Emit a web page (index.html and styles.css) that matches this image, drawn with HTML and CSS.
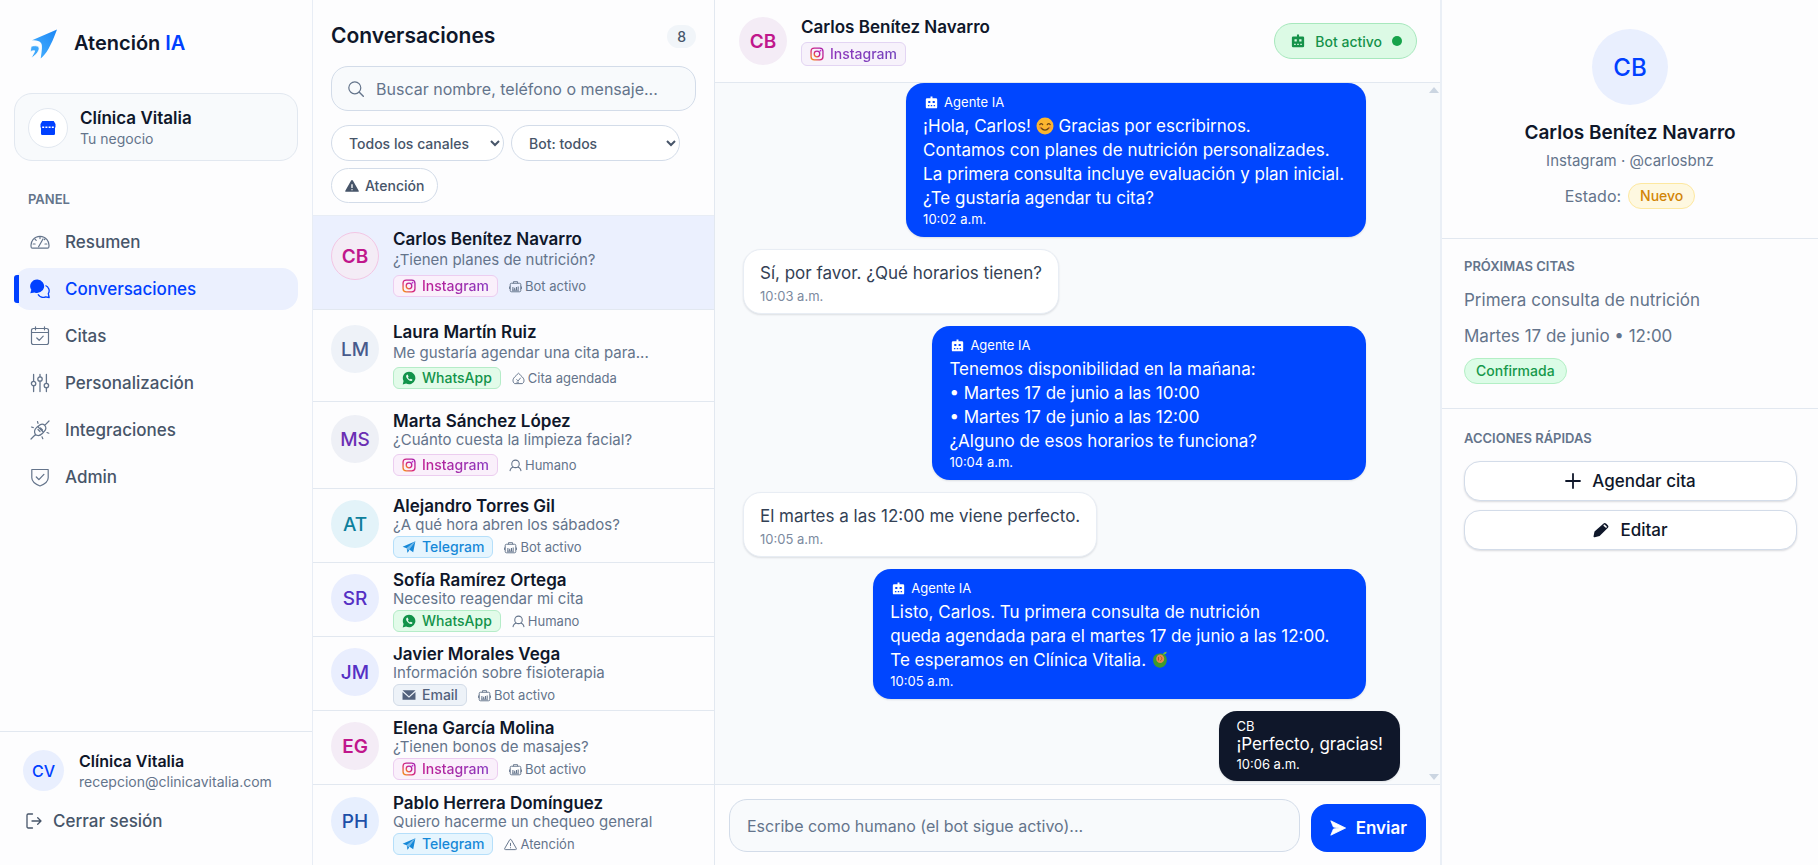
FILE: index.html
```html
<!DOCTYPE html>
<html lang="es">
<head>
	<meta charset="UTF-8">
	<meta name="viewport" content="width=device-width, initial-scale=1">
	<title>Atención IA</title>
	<link rel="stylesheet" href="styles.css">
</head>
<body>

<!-- Icon sprite -->
<svg class="sprite" aria-hidden="true">
	<defs>
		<linearGradient id="ig" x1="0" y1="1" x2="1" y2="0">
			<stop offset="0" stop-color="#f59e0b"/>
			<stop offset="0.4" stop-color="#db2777"/>
			<stop offset="1" stop-color="#a21caf"/>
		</linearGradient>
		<linearGradient id="sky" x1="1" y1="0" x2="0" y2="1">
			<stop offset="0" stop-color="#1b86f5"/>
			<stop offset="1" stop-color="#4bb4ff"/>
		</linearGradient>
	</defs>
	<symbol id="i-gauge" viewBox="0 0 20 20">
		<path d="M2.6 16.2a1.6 1.6 0 0 1-1.4-1A9 9 0 1 1 18.8 15.200a1.600 1.600 0 0 1-1.400 1z" fill="none" stroke="currentColor" stroke-width="1.200"/>
		<path d="M8.600 14.800 13 7M10 4.800v1.800M5 7.200l1.200 1.200M3.200 12h1.900M15 12h1.800M14.400 7.600l.6-.6" fill="none" stroke="currentColor" stroke-width="1.200" stroke-linecap="round"/>
	</symbol>
	<symbol id="i-chats" viewBox="0 0 20 20">
		<path d="M7.500.5a7 6.700 0 1 1-3 12.900L.3 14.200l1-3.400A7 6.700 0 0 1 7.500.5z" fill="currentColor"/>
		<path d="M15.500 6.500a5.600 5.600 0 0 1 2.800 8.200l.9 3.800-3.600-.7a6 6 0 0 1-7.600-2.400" fill="none" stroke="currentColor" stroke-width="1.300" stroke-linejoin="round"/>
	</symbol>
	<symbol id="i-calendar" viewBox="0 0 20 20">
		<path d="M3.300 2.500h13.400a1.800 1.800 0 0 1 1.800 1.800v12.400a1.800 1.800 0 0 1-1.800 1.800H3.300a1.800 1.800 0 0 1-1.800-1.800V4.300a1.800 1.800 0 0 1 1.800-1.800zM1.500 6.500h17M5.500.8v3M14.500.8v3M6.800 12l2.400 2.300 4-4.200" fill="none" stroke="currentColor" stroke-width="1.200" stroke-linecap="round" stroke-linejoin="round"/>
	</symbol>
	<symbol id="i-sliders" viewBox="0 0 20 20">
		<g fill="none" stroke="currentColor" stroke-width="1.300" stroke-linecap="round">
			<circle cx="3.600" cy="10.500" r="2.200"/><circle cx="10" cy="6" r="2.200"/><circle cx="16.400" cy="12.500" r="2.200"/>
			<path d="M3.600 1.500v6.800M3.600 12.700v5.800M10 1.500v2.300M10 8.200v10.300M16.400 1.500v8.800M16.400 14.700v3.800"/>
		</g>
	</symbol>
	<symbol id="i-plug" viewBox="0 0 20 20">
		<g fill="none" stroke="currentColor" stroke-width="1.200" stroke-linecap="round" stroke-linejoin="round">
			<path d="M1 19l4.500-4.500M5.500 14.500C3.800 12 4.600 9.600 6.500 7.700l1.200-1.200 5.800 5.800-1.200 1.200c-1.900 1.900-4.600 2.600-6.800 1zM8.500 6c2-2 4.300-2.500 6.200-.7 1.700 1.900 1.400 4.200-.6 6.200M14.700 5.300 19 1M8 9.500l2 2M10.500 8l2 2"/>
			<path d="M7.500 1.500l.5 1.800M1.500 7l1.800.6M12 16.800l.8 1.900M17 12.500l1.800.7"/>
		</g>
	</symbol>
	<symbol id="i-shield" viewBox="0 0 20 20">
		<path d="M1.800 2.500h16.400v8.200c0 4.200-4 6.600-8.200 8.300-4.200-1.700-8.200-4.100-8.200-8.300z" fill="none" stroke="currentColor" stroke-width="1.200" stroke-linejoin="round"/>
		<path d="M6.300 10l2.600 2.600 5-5.200" fill="none" stroke="currentColor" stroke-width="1.300" stroke-linecap="round" stroke-linejoin="round"/>
	</symbol>
	<symbol id="i-logout" viewBox="0 0 16 16">
		<path d="M6.500 1H2.200A1.200 1.200 0 0 0 1 2.200v11.600A1.200 1.200 0 0 0 2.200 15h4.300M6 8h9M11.700 4.800 15 8l-3.300 3.200" fill="none" stroke="currentColor" stroke-width="1.300" stroke-linecap="round" stroke-linejoin="round"/>
	</symbol>
	<symbol id="i-shop" viewBox="0 0 16 16">
		<path d="M2.300 1h11.400L15.500 4v3.500h-15V4zM1 7.500h14v6.300a1.200 1.200 0 0 1-1.200 1.200H2.200A1.200 1.200 0 0 1 1 13.800z" fill="currentColor"/>
		<path d="M2.200 7.300h2M5.400 7.300h2M8.600 7.300h2M11.800 7.300h2" stroke="#fff" stroke-width="1.600"/>
	</symbol>
	<symbol id="i-search" viewBox="0 0 16 16">
		<circle cx="6.800" cy="6.800" r="6" fill="none" stroke="currentColor" stroke-width="1.200"/>
		<path d="M11.300 11.300 15.300 15.300" stroke="currentColor" stroke-width="1.400" stroke-linecap="round"/>
	</symbol>
	<symbol id="i-warn" viewBox="0 0 16 16">
		<path d="M7 1.800a1.150 1.150 0 0 1 2 0l6.500 11.200a1.150 1.150 0 0 1-1 1.700H1.500a1.150 1.150 0 0 1-1-1.700z" fill="currentColor"/>
		<path d="M8 6v4.200M8 11.700v1.200" stroke="#fff" stroke-width="1.500"/>
	</symbol>
	<symbol id="i-warn-line" viewBox="0 0 16 16">
		<path d="M7 2.200a1.150 1.150 0 0 1 2 0l6 10.400a1.150 1.150 0 0 1-1 1.700H2a1.150 1.150 0 0 1-1-1.700zM8 6v4M8 11.400v1.200" fill="none" stroke="currentColor" stroke-width="1.200"/>
	</symbol>
	<symbol id="i-bot-line" viewBox="0 0 16 16">
		<rect x="1.500" y="4" width="13" height="10.500" rx="1.500" fill="none" stroke="currentColor" stroke-width="1.200"/>
		<path d="M5.500 4V2h5v2M.6 8v3M15.400 8v3M3.600 12.600h8.800" fill="none" stroke="currentColor" stroke-width="1.100"/>
		<path d="M4.800 8.500v4M7 9.500v3M9.200 8.500v4M11.300 8v4" stroke="currentColor" stroke-width="1.300"/>
	</symbol>
	<symbol id="i-bot" viewBox="0 0 16 16">
		<path fill-rule="evenodd" d="M6.800.5h2.400v2.300h4.300a1.500 1.500 0 0 1 1.500 1.500v9.400a1.500 1.500 0 0 1-1.500 1.500h-11A1.500 1.500 0 0 1 1 13.700V4.300a1.500 1.500 0 0 1 1.500-1.500h4.300zM4 6v2.600h2.600V6zm5.400 0v2.600H12V6zM3.600 11v1.500h1.800V11zm3.500 0v1.500h1.800V11zm3.500 0v1.500h1.800V11z" fill="currentColor"/>
	</symbol>
	<symbol id="i-person" viewBox="0 0 16 16">
		<circle cx="8" cy="6" r="4.600" fill="none" stroke="currentColor" stroke-width="1.300"/>
		<path d="M1.200 15c.4-3 1.700-4.700 4.300-5.200M14.800 15c-.4-3-1.700-4.700-4.300-5.200" fill="none" stroke="currentColor" stroke-width="1.300"/>
	</symbol>
	<symbol id="i-booked" viewBox="0 0 16 16">
		<path d="M3.200 14.300C1.500 13 1 11.500 1.300 9.500 1.700 7 5 4.500 8 1.500c3 3 6.300 5.500 6.700 8 .3 2-.2 3.500-1.900 4.800z" fill="none" stroke="currentColor" stroke-width="1.200" stroke-linejoin="round"/>
		<path d="M5.500 9l2 2 3.200-4M5.500 12.500h3" fill="none" stroke="currentColor" stroke-width="1.200"/>
	</symbol>
	<symbol id="i-instagram" viewBox="0 0 16 16">
		<rect x="1.200" y="1.200" width="13.600" height="13.600" rx="3.600" fill="none" stroke="url(#ig)" stroke-width="1.500"/>
		<circle cx="8" cy="8" r="3.200" fill="none" stroke="url(#ig)" stroke-width="1.500"/>
		<circle cx="12" cy="4.200" r="1" fill="#c026d3"/>
	</symbol>
	<symbol id="i-whatsapp" viewBox="0 0 16 16">
		<path d="M8.100.8a7.200 7.200 0 1 1-3.500 13.500L.8 15.300l1-3.800A7.200 7.200 0 0 1 8.100.8z" fill="currentColor"/>
		<path d="M5.600 4.200c-1.400 1-1.100 3 .7 5s3.900 3 5.300 1.700c.5-.6.5-1 .1-1.300L10 8.800l-1 .9C8 9.300 7.200 8.400 6.800 7.500l.7-.9-.8-2c-.2-.5-.6-.7-1.100-.4z" fill="#e8fbee"/>
	</symbol>
	<symbol id="i-telegram" viewBox="0 0 16 16">
		<path d="M15.300 1.500.7 7.700l4.600 1.800zM15.300 1.500 12.800 14l-4.500-3.200zM6 10.200l.2 4.300 2-2.500z" fill="currentColor"/>
		<path d="M15.300 1.500 5.300 9.500l.9 5z" fill="currentColor" fill-opacity=".55"/>
	</symbol>
	<symbol id="i-mail" viewBox="0 0 16 16">
		<path d="M.6 2.500h14.800L8 9.300zM.6 4.500v9h14.800v-9L8 11z" fill="currentColor"/>
	</symbol>
	<symbol id="i-plus" viewBox="0 0 16 16">
		<path d="M8 1v14M1 8h14" stroke="currentColor" stroke-width="1.800" stroke-linecap="round"/>
	</symbol>
	<symbol id="i-pencil" viewBox="0 0 16 16">
		<path d="M10.300 1.800a2 2 0 0 1 2.700-.2l1.800 1.700a1.800 1.800 0 0 1-.1 2.600L6.600 14l-4.800 1.200a1 1 0 0 1-1.200-1.200l.9-4.500z" fill="currentColor"/>
		<path d="M11.300 3.300 13.100 5" stroke="#fff" stroke-width="1.600" stroke-linecap="round"/>
	</symbol>
	<symbol id="i-send" viewBox="0 0 16 16">
		<path d="M.8.8 15.600 8 .8 15.200 3.400 9 9.500 8 3.400 7z" fill="currentColor" stroke="currentColor" stroke-width=".8" stroke-linejoin="round"/>
	</symbol>
</svg>

<div class="app">

	<!-- Sidebar -->
	<aside class="sidebar">
		<div class="brand">
			<svg class="brand-logo" viewBox="0 0 28 30" aria-hidden="true">
				<path d="M27 .5 1.500 11.500c3.500-.6 8 .2 9.700 2.700 1.300 2.200.8 6.800-.5 15.300C16 25.500 21 17 27 .5z" fill="url(#sky)"/>
				<path d="M1.200 17.200c3.300-.8 6.400-.7 7.600.9C10.200 20.500 7 26 1.200 29c1.300-2.700 3.200-5.300 3.500-7.200-1.300-.4-2.900.2-4.500.9z" fill="#3fa8fb" stroke="#fff" stroke-width=".8"/>
			</svg>
			<span class="brand-name">Atención <b>IA</b></span>
		</div>

		<div class="business">
			<span class="business-icon"><svg class="ico-16"><use href="#i-shop"/></svg></span>
			<div>
				<div class="business-name">Clínica Vitalia</div>
				<div class="business-sub">Tu negocio</div>
			</div>
		</div>

		<h2 class="nav-title">PANEL</h2>
		<nav class="nav">
			<a href="#"><svg class="ico-20"><use href="#i-gauge"/></svg>Resumen</a>
			<a href="#" class="active"><svg class="ico-20"><use href="#i-chats"/></svg>Conversaciones</a>
			<a href="#"><svg class="ico-20"><use href="#i-calendar"/></svg>Citas</a>
			<a href="#"><svg class="ico-20"><use href="#i-sliders"/></svg>Personalización</a>
			<a href="#"><svg class="ico-20"><use href="#i-plug"/></svg>Integraciones</a>
			<a href="#"><svg class="ico-20"><use href="#i-shield"/></svg>Admin</a>
		</nav>

		<div class="account">
			<div class="account-user">
				<span class="avatar avatar-sm blue">CV</span>
				<div>
					<div class="account-name">Clínica Vitalia</div>
					<div class="account-mail">recepcion@clinicavitalia.com</div>
				</div>
			</div>
			<button type="button" class="logout"><svg class="ico-16"><use href="#i-logout"/></svg>Cerrar sesión</button>
		</div>
	</aside>

	<!-- Conversation list -->
	<section class="inbox">
		<header class="inbox-head">
			<div class="inbox-title">
				<h1>Conversaciones</h1>
				<span class="count">8</span>
			</div>
			<div class="search">
				<svg class="ico-16"><use href="#i-search"/></svg>
				<input type="search" aria-label="Buscar" placeholder="Buscar nombre, teléfono o mensaje...">
			</div>
			<div class="filters">
				<select class="filter-channel" aria-label="Canal"><option>Todos los canales</option></select>
				<select class="filter-bot" aria-label="Bot"><option>Bot: todos</option></select>
				<button type="button"><svg class="ico-14"><use href="#i-warn"/></svg>Atención</button>
			</div>
		</header>

		<div class="conv-list">
			<article class="conv roomy active">
				<span class="avatar pink ring">CB</span>
				<div class="conv-body">
					<h3>Carlos Benítez Navarro</h3>
					<p>¿Tienen planes de nutrición?</p>
					<div class="tags">
						<span class="tag instagram"><svg class="ico-14"><use href="#i-instagram"/></svg><span>Instagram</span></span>
						<span class="state"><svg class="ico-12"><use href="#i-bot-line"/></svg>Bot activo</span>
					</div>
				</div>
			</article>
			<article class="conv roomy">
				<span class="avatar slate">LM</span>
				<div class="conv-body">
					<h3>Laura Martín Ruiz</h3>
					<p>Me gustaría agendar una cita para...</p>
					<div class="tags">
						<span class="tag whatsapp"><svg class="ico-14"><use href="#i-whatsapp"/></svg><span>WhatsApp</span></span>
						<span class="state"><svg class="ico-12"><use href="#i-booked"/></svg>Cita agendada</span>
					</div>
				</div>
			</article>
			<article class="conv medium">
				<span class="avatar purple">MS</span>
				<div class="conv-body">
					<h3>Marta Sánchez López</h3>
					<p>¿Cuánto cuesta la limpieza facial?</p>
					<div class="tags">
						<span class="tag instagram"><svg class="ico-14"><use href="#i-instagram"/></svg><span>Instagram</span></span>
						<span class="state"><svg class="ico-12"><use href="#i-person"/></svg>Humano</span>
					</div>
				</div>
			</article>
			<article class="conv">
				<span class="avatar teal">AT</span>
				<div class="conv-body">
					<h3>Alejandro Torres Gil</h3>
					<p>¿A qué hora abren los sábados?</p>
					<div class="tags">
						<span class="tag telegram"><svg class="ico-14"><use href="#i-telegram"/></svg><span>Telegram</span></span>
						<span class="state"><svg class="ico-12"><use href="#i-bot-line"/></svg>Bot activo</span>
					</div>
				</div>
			</article>
			<article class="conv">
				<span class="avatar violet">SR</span>
				<div class="conv-body">
					<h3>Sofía Ramírez Ortega</h3>
					<p>Necesito reagendar mi cita</p>
					<div class="tags">
						<span class="tag whatsapp"><svg class="ico-14"><use href="#i-whatsapp"/></svg><span>WhatsApp</span></span>
						<span class="state"><svg class="ico-12"><use href="#i-person"/></svg>Humano</span>
					</div>
				</div>
			</article>
			<article class="conv">
				<span class="avatar violet">JM</span>
				<div class="conv-body">
					<h3>Javier Morales Vega</h3>
					<p>Información sobre fisioterapia</p>
					<div class="tags">
						<span class="tag email"><svg class="ico-14"><use href="#i-mail"/></svg><span>Email</span></span>
						<span class="state"><svg class="ico-12"><use href="#i-bot-line"/></svg>Bot activo</span>
					</div>
				</div>
			</article>
			<article class="conv">
				<span class="avatar pink">EG</span>
				<div class="conv-body">
					<h3>Elena García Molina</h3>
					<p>¿Tienen bonos de masajes?</p>
					<div class="tags">
						<span class="tag instagram"><svg class="ico-14"><use href="#i-instagram"/></svg><span>Instagram</span></span>
						<span class="state"><svg class="ico-12"><use href="#i-bot-line"/></svg>Bot activo</span>
					</div>
				</div>
			</article>
			<article class="conv">
				<span class="avatar navy">PH</span>
				<div class="conv-body">
					<h3>Pablo Herrera Domínguez</h3>
					<p>Quiero hacerme un chequeo general</p>
					<div class="tags">
						<span class="tag telegram"><svg class="ico-14"><use href="#i-telegram"/></svg><span>Telegram</span></span>
						<span class="state"><svg class="ico-12"><use href="#i-warn-line"/></svg>Atención</span>
					</div>
				</div>
			</article>
		</div>
	</section>

	<!-- Chat -->
	<main class="chat">
		<header class="chat-head">
			<span class="avatar pink">CB</span>
			<div class="chat-who">
				<h2>Carlos Benítez Navarro</h2>
				<span class="tag instagram soft"><svg class="ico-14"><use href="#i-instagram"/></svg><span>Instagram</span></span>
			</div>
			<button type="button" class="bot-toggle"><svg class="ico-14"><use href="#i-bot"/></svg>Bot activo<i class="dot"></i></button>
		</header>

		<div class="messages">
			<div class="msg agent w-70">
				<div class="from"><svg class="ico-12"><use href="#i-bot"/></svg>Agente IA</div>
				<p>¡Hola, Carlos! <svg class="emoji" viewBox="0 0 18 18" role="img" aria-label="sonrisa"><circle cx="9" cy="9" r="8.500" fill="#fbb52f"/><path d="M3.800 7.600q1.400-2 2.900 0M11.300 7.600q1.400-2 2.900 0M4.800 10.800q4.200 4.600 8.400 0" fill="none" stroke="#6b4416" stroke-width="1.300" stroke-linecap="round"/><circle cx="4" cy="10.500" r="1.500" fill="#f58a4a" opacity=".6"/><circle cx="14" cy="10.500" r="1.500" fill="#f58a4a" opacity=".6"/></svg> Gracias por escribirnos.<br>
				Contamos con planes de nutrición personalizades.<br>
				La primera consulta incluye evaluación y plan inicial.<br>
				¿Te gustaría agendar tu cita?</p>
				<time>10:02 a.m.</time>
			</div>
			<div class="msg client">
				<p>Sí, por favor. ¿Qué horarios tienen?</p>
				<time>10:03 a.m.</time>
			</div>
			<div class="msg agent w-66">
				<div class="from"><svg class="ico-12"><use href="#i-bot"/></svg>Agente IA</div>
				<p>Tenemos disponibilidad en la mañana:<br>
				• Martes 17 de junio a las 10:00<br>
				• Martes 17 de junio a las 12:00<br>
				¿Alguno de esos horarios te funciona?</p>
				<time>10:04 a.m.</time>
			</div>
			<div class="msg client">
				<p>El martes a las 12:00 me viene perfecto.</p>
				<time>10:05 a.m.</time>
			</div>
			<div class="msg agent w-75">
				<div class="from"><svg class="ico-12"><use href="#i-bot"/></svg>Agente IA</div>
				<p>Listo, Carlos. Tu primera consulta de nutrición<br>
				queda agendada para el martes 17 de junio a las 12:00.<br>
				Te esperamos en Clínica Vitalia. <svg class="emoji" viewBox="0 0 18 18" role="img" aria-label="fruta"><path d="M9 2.500c4.500-.6 7 2.600 6.800 6.800-.2 4.300-3 7.400-6.800 7.400S2.200 13.600 2.100 9.300C2 5.200 4.700 2.200 9 2.500z" fill="#3f9a2c"/><path d="M12 3.500c.4-1.700 1.600-2.600 3.600-2.700 0 1.900-1.100 3.100-3.600 2.700z" fill="#6cc03f"/><ellipse cx="9.200" cy="7.800" rx="4" ry="4.300" fill="#e58a4c"/><path d="M7.500 6v3.500M9.500 5.500c2 1 1.500 3.500-.5 4.500" stroke="#b4532a" fill="none"/></svg></p>
				<time>10:05 a.m.</time>
			</div>
			<div class="msg human">
				<div class="from">CB</div>
				<p>¡Perfecto, gracias!</p>
				<time>10:06 a.m.</time>
			</div>
			<i class="scroll-up"></i>
			<i class="scroll-down"></i>
		</div>

		<form class="composer">
			<input type="text" aria-label="Mensaje" placeholder="Escribe como humano (el bot sigue activo)...">
			<button type="button"><svg class="ico-16"><use href="#i-send"/></svg>Enviar</button>
		</form>
	</main>

	<!-- Contact details -->
	<aside class="details">
		<section class="profile">
			<span class="avatar avatar-lg blue">CB</span>
			<h2>Carlos Benítez Navarro</h2>
			<p class="handle">Instagram · @carlosbnz</p>
			<p class="status">Estado: <span class="pill amber">Nuevo</span></p>
		</section>
		<section class="appointments">
			<h3>PRÓXIMAS CITAS</h3>
			<p>Primera consulta de nutrición</p>
			<p>Martes 17 de junio • 12:00</p>
			<span class="pill green">Confirmada</span>
		</section>
		<section class="actions">
			<h3>ACCIONES RÁPIDAS</h3>
			<button type="button"><svg class="ico-16"><use href="#i-plus"/></svg>Agendar cita</button>
			<button type="button"><svg class="ico-16"><use href="#i-pencil"/></svg>Editar</button>
		</section>
	</aside>

</div>
</body>
</html>
```

FILE: styles.css
```css
*{
	box-sizing: border-box;
}

body{
	margin: 0;
	font-family: Inter, "Liberation Sans", sans-serif;
	font-size: 16px;
	color: #0f172a;
	background: #fdfdfe;
}

h1, h2, h3, p{
	margin: 0;
}

button, input, select{
	font-family: inherit;
}

button{
	cursor: pointer;
}

svg{
	flex: none;
}

.sprite{
	position: absolute;
	width: 0;
	height: 0;
}

.ico-12{ width: 13px; height: 13px; }
.ico-14{ width: 14px; height: 14px; }
.ico-16{ width: 16px; height: 16px; }
.ico-20{ width: 20px; height: 20px; }

.app{
	display: grid;
	grid-template-columns: 312px 403px minmax(0, 1fr) 378px;
	height: 100vh;
	overflow: hidden;
}

/* Sidebar */
.sidebar{
	display: flex;
	flex-direction: column;
	min-height: 0;
}

.brand{
	display: flex;
	align-items: center;
	gap: 16px;
	padding: 28px 30px 34px;
}

.brand-logo{
	width: 28px;
	height: 30px;
}

.brand-name{
	font-size: 20px;
	font-weight: 600;
	line-height: 31px;
}

.brand-name b{
	font-weight: 600;
	color: #0040ff;
}

.business{
	display: flex;
	align-items: center;
	gap: 12px;
	margin: 0 14px;
	padding: 14px 13px 12px;
	border: 1px solid #e2e8f0;
	border-radius: 18px;
	background: #f8fafc;
}

.business-icon{
	display: flex;
	align-items: center;
	justify-content: center;
	width: 40px;
	height: 40px;
	border: 1px solid #e2e8f0;
	border-radius: 50%;
	background: #fff;
	color: #0040ff;
}

.business-name, .account-name{
	font-size: 17px;
	font-weight: 600;
	line-height: 21px;
}

.account-name{
	font-size: 16px;
}

.business-sub, .account-mail{
	font-size: 14px;
	line-height: 19px;
	color: #64748b;
}

.nav-title{
	margin: 28px 28px 12px;
	font-size: 13px;
	font-weight: 600;
	line-height: 20px;
	color: #64748b;
}

.nav{
	display: flex;
	flex-direction: column;
	gap: 5px;
	padding: 0 14px;
}

.nav a{
	position: relative;
	display: flex;
	align-items: center;
	gap: 15px;
	height: 42px;
	padding: 0 16px;
	border-radius: 16px;
	font-size: 17px;
	font-weight: 500;
	color: #475569;
	text-decoration: none;
}

.nav a svg{
	color: #64748b;
}

.nav a.active, .nav a.active svg{
	background: #ebf0fe;
	color: #0040ff;
}

.nav a.active::before{
	content: "";
	position: absolute;
	left: 0;
	top: 7px;
	width: 5px;
	height: 28px;
	border-radius: 3px 0 0 3px;
	background: #0040ff;
}

.account{
	margin-top: auto;
	padding: 18px 23px 32px;
	border-top: 1px solid #e2e8f0;
}

.account-user{
	display: flex;
	align-items: center;
	gap: 15px;
}

.logout{
	display: flex;
	align-items: center;
	gap: 11px;
	margin-top: 18px;
	padding: 0 3px;
	border: 0;
	background: none;
	font-size: 17px;
	font-weight: 500;
	line-height: 24px;
	color: #475569;
}

/* Avatars */
.avatar{
	display: flex;
	flex: none;
	align-items: center;
	justify-content: center;
	width: 48px;
	height: 48px;
	border-radius: 50%;
	font-size: 19px;
	font-weight: 500;
}

.avatar-sm{
	width: 41px;
	height: 41px;
	font-size: 16px;
}

.avatar-lg{
	width: 76px;
	height: 76px;
	font-size: 24px;
}

.blue{ background: #e9effe; color: #0040ff; }
.pink{ background: #f4ecf6; color: #c0178c; font-weight: 600; }
.slate{ background: #eef2f8; color: #475a8c; }
.purple{ background: #eef0f6; color: #6b2fb3; }
.teal{ background: #e3f3f9; color: #0e7f9c; }
.violet{ background: #e9eefe; color: #5530c4; }
.navy{ background: #e7effe; color: #1d4fa8; }
.ring{ border: 1px solid #f3c6e4; }

/* Tags */
.tag{
	display: inline-flex;
	align-items: center;
	gap: 6px;
	height: 22px;
	padding: 0 8px;
	border: 1px solid;
	border-radius: 6px;
	font-size: 14px;
	font-weight: 500;
	line-height: 20px;
}

.instagram{ border-color: #eccdf0; background: #faf0fb; color: #b0219f; }
.instagram span{
	background: linear-gradient(90deg, #be1d93, #8b3bc0);
	background-clip: text;
	-webkit-background-clip: text;
	color: transparent;
}
.whatsapp{ border-color: #b5ecc8; background: #e2fbe9; color: #12934a; }
.telegram{ border-color: #b5dffa; background: #e6f5fe; color: #1688d8; }
.email{ border-color: #d3dce8; background: #edf2f8; color: #52617c; }
.soft{
	height: 24px;
	border-color: #e3d5f3;
	background: #f7f2fb;
}
.soft span{
	background-image: linear-gradient(90deg, #8f35bb, #7445bd);
}

.state{
	display: inline-flex;
	align-items: center;
	gap: 3px;
	font-size: 13px;
	color: #64748b;
}

/* Conversation list */
.inbox{
	display: flex;
	flex-direction: column;
	min-height: 0;
	border-left: 1px solid #e8edf5;
	border-right: 1px solid #e2e8f0;
}

.inbox-head{
	padding: 22px 18px 12px;
	border-bottom: 1px solid #e8edf5;
}

.inbox-title{
	display: flex;
	align-items: center;
	justify-content: space-between;
	margin-bottom: 16px;
}

.inbox-title h1{
	font-size: 21px;
	font-weight: 600;
	line-height: 28px;
}

.count{
	padding: 0 10px;
	border-radius: 12px;
	background: #f1f5f9;
	font-size: 14px;
	font-weight: 500;
	line-height: 23px;
	color: #475569;
}

.search{
	display: flex;
	align-items: center;
	gap: 12px;
	height: 45px;
	padding: 0 16px;
	border: 1px solid #d3dce9;
	border-radius: 17px;
	background: #f8fafc;
	color: #64748b;
}

.search input{
	flex: 1;
	min-width: 0;
	padding: 0;
	border: 0;
	outline: 0;
	background: none;
	font-size: 16px;
}

input::placeholder{
	color: #64748b;
	opacity: 1;
}

.filters{
	display: flex;
	flex-wrap: wrap;
	gap: 7px;
	margin-top: 14px;
}

.filters select, .filters button{
	height: 36px;
	padding: 0 13px;
	border: 1px solid #d3dce9;
	border-radius: 18px;
	background: #fff;
	font-size: 14px;
	font-weight: 500;
	color: #475569;
}

.filters select{
	padding-right: 0;
}

.filter-channel{
	width: 173px;
}

.filter-bot{
	width: 169px;
}

.filters button{
	display: flex;
	align-items: center;
	gap: 6px;
	height: 35px;
}

.conv-list{
	flex: 1;
	min-height: 0;
	overflow: hidden;
}

.conv{
	display: flex;
	gap: 14px;
	padding: 7px 18px 4px;
	border-bottom: 1px solid #e2e8f0;
}

.conv:last-child{
	padding-top: 8px;
	border-bottom: 0;
}

.conv .avatar{
	margin-top: 4px;
}

.conv h3{
	font-size: 17px;
	font-weight: 600;
	line-height: 20px;
}

.conv p{
	margin-bottom: 3px;
	font-size: 15px;
	line-height: 17px;
	color: #64748b;
}

.tags{
	display: flex;
	align-items: center;
	gap: 11px;
}

.conv.medium{
	padding: 9px 18px 12px;
}

.conv.medium p{
	margin-bottom: 6px;
}

.conv.roomy{
	padding: 11px 18px 12px;
}

.conv.roomy h3{
	line-height: 22px;
}

.conv.roomy p{
	margin-bottom: 5px;
	line-height: 19px;
}

.conv.active{
	padding-top: 12px;
	background: #ebf0fe;
}

.conv.active p{
	margin-bottom: 6px;
}

/* Chat */
.chat{
	display: flex;
	flex-direction: column;
	min-width: 0;
	min-height: 0;
}

.chat-head{
	display: flex;
	align-items: center;
	gap: 14px;
	height: 83px;
	padding: 0 23px 0 24px;
	border-bottom: 1px solid #e2e8f0;
}

.chat-who h2{
	margin-bottom: 4px;
	font-size: 17px;
	font-weight: 600;
	line-height: 22px;
}

.chat-who .tag{
	display: flex;
	width: fit-content;
}

.bot-toggle{
	display: flex;
	align-items: center;
	gap: 10px;
	height: 36px;
	margin-left: auto;
	padding: 0 14px 0 16px;
	border: 1px solid #a7e8bd;
	border-radius: 18px;
	background: #dcfae5;
	font-size: 14px;
	font-weight: 500;
	color: #15924a;
}

.dot{
	width: 10px;
	height: 10px;
	border-radius: 50%;
	background: #16a34a;
}

.messages{
	position: relative;
	display: flex;
	flex: 1;
	flex-direction: column;
	align-items: flex-start;
	gap: 12px;
	min-height: 0;
	padding: 0 40px 0 28px;
	overflow: hidden;
	background: #f8fafc;
}

.msg{
	padding: 10px 17px 9px;
	border-radius: 18px;
	box-shadow: 0 1px 2px rgba(15, 23, 42, .12);
}

.msg p{
	font-size: 17px;
	line-height: 24px;
}

.msg time{
	display: block;
	font-size: 13px;
	line-height: 18px;
}

.from{
	display: flex;
	align-items: center;
	gap: 6px;
	margin-bottom: 3px;
	font-size: 13px;
	line-height: 18px;
}

.from svg{
	margin-left: 2px;
}

.agent{
	align-self: flex-end;
	margin-right: 34px;
	background: #0046ff;
	color: #fff;
}

.w-66{ width: 66%; }
.w-70{ width: 70%; }
.w-75{ width: 75%; }

.client{
	padding: 11px 16px 8px;
	border: 1px solid #e8edf4;
	background: #fff;
	color: #334155;
}

.client time{
	margin-top: 2px;
	color: #7c8aa0;
}

.human{
	align-self: flex-end;
	padding: 7px 17px 8px;
	background: #0f172a;
	color: #fff;
}

.human .from{
	margin: 0;
	line-height: 16px;
}

.human p{
	line-height: 21px;
}

.emoji{
	width: 18px;
	height: 18px;
	vertical-align: -3px;
}

.scroll-up, .scroll-down{
	position: absolute;
	right: 1px;
	border: 5px solid transparent;
}

.scroll-up{
	top: -1px;
	border-bottom: 6px solid #cbd5e1;
}

.scroll-down{
	bottom: -1px;
	border-top: 6px solid #cbd5e1;
}

.composer{
	display: flex;
	align-items: flex-end;
	gap: 11px;
	padding: 14px 14px 13px;
	border-top: 1px solid #e2e8f0;
}

.composer input{
	flex: 1;
	min-width: 0;
	height: 53px;
	padding: 0 17px;
	border: 1px solid #d3dce9;
	border-radius: 18px;
	background: #f8fafc;
	font-size: 16px;
}

.composer button{
	display: flex;
	align-items: center;
	gap: 10px;
	height: 48px;
	padding: 0 19px;
	border: 0;
	border-radius: 16px;
	background: #0046ff;
	font-size: 17px;
	font-weight: 600;
	color: #fff;
}

/* Details */
.details{
	border-left: 2px solid #eaeff6;
}

.details section{
	padding: 0 21px 0 22px;
	border-bottom: 1px solid #e2e8f0;
}

.details h3{
	font-size: 13px;
	font-weight: 600;
	line-height: 20px;
	color: #64748b;
}

.details .profile{
	display: flex;
	flex-direction: column;
	align-items: center;
	padding: 29px 22px;
}

.profile h2{
	margin-top: 15px;
	font-size: 19px;
	font-weight: 600;
	line-height: 26px;
}

.handle{
	margin-top: 5px;
	font-size: 15px;
	line-height: 20px;
	color: #64748b;
}

.status{
	display: flex;
	align-items: center;
	gap: 7px;
	margin-top: 12px;
	font-size: 16px;
	color: #64748b;
}

.pill{
	display: inline-block;
	padding: 0 11px;
	border: 1px solid;
	border-radius: 14px;
	font-size: 14px;
	font-weight: 500;
	line-height: 24px;
}

.amber{ border-color: #fde8a0; background: #fef8e0; color: #d28406; }
.green{ border-color: #b3efc5; background: #dcfce7; color: #16984a; }

.details .appointments{
	padding-top: 17px;
	padding-bottom: 24px;
}

.appointments p{
	margin-top: 12px;
	font-size: 17px;
	line-height: 24px;
	color: #64748b;
}

.appointments .pill{
	margin-top: 10px;
}

.details .actions{
	padding-top: 19px;
	border-bottom: 0;
}

.actions button{
	display: flex;
	align-items: center;
	justify-content: center;
	gap: 11px;
	width: 100%;
	height: 40px;
	margin-top: 9px;
	border: 1px solid #d3dce9;
	border-radius: 16px;
	background: #fff;
	box-shadow: 0 1px 2px rgba(15, 23, 42, .15);
	font-size: 17px;
	font-weight: 500;
	color: #0f172a;
}

.actions h3{
	margin-bottom: 13px;
}
```
